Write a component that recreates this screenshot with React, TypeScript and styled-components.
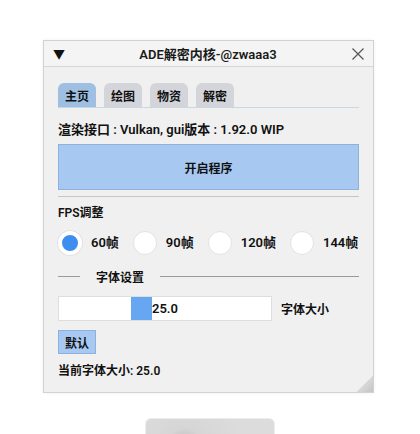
import styled, { createGlobalStyle } from "styled-components";

const GlobalStyle = createGlobalStyle`
  html, body {
    margin: 0;
    padding: 0;
    background: #ffffff;
  }
  body {
    font-family: "Noto Sans CJK SC", "Noto Sans", sans-serif;
    color: #111;
  }
`;

const fpsOptions = [
  { label: "60帧", checked: true },
  { label: "90帧", checked: false },
  { label: "120帧", checked: false },
  { label: "144帧", checked: false },
];

const tabs = [
  { label: "主页", active: true },
  { label: "绘图", active: false },
  { label: "物资", active: false },
  { label: "解密", active: false },
];

const fontSize = 25.0;
const sliderRatio = 0.34;

const App = () => {
  return (
    <Page>
      <GlobalStyle />
      <Window>
        <TitleBar>
          <Collapse>▼</Collapse>
          <Title>ADE解密内核-@zwaaa3</Title>
          <CloseIcon width="14" height="14" viewBox="0 0 14 14">
            <path d="M1.5 1.5 L12.5 12.5 M12.5 1.5 L1.5 12.5" stroke="#555" strokeWidth="1.2" />
          </CloseIcon>
        </TitleBar>
        <Body>
          <TabBar>
            {tabs.map((tab) => (
              <Tab key={tab.label} $active={tab.active}>
                {tab.label}
              </Tab>
            ))}
          </TabBar>
          <InfoText>渲染接口 : Vulkan, gui版本 : 1.92.0 WIP</InfoText>
          <BigButton>开启程序</BigButton>
          <Divider />
          <Label>FPS调整</Label>
          <RadioRow>
            {fpsOptions.map((opt) => (
              <RadioItem key={opt.label}>
                <RadioCircle $checked={opt.checked} />
                <RadioLabel>{opt.label}</RadioLabel>
              </RadioItem>
            ))}
          </RadioRow>
          <SectionTitle>
            <ShortLine />
            <SectionText>字体设置</SectionText>
            <LongLine />
          </SectionTitle>
          <SliderRow>
            <Slider>
              <Thumb style={{ left: `${sliderRatio * 100}%` }} />
              <SliderValue>{fontSize.toFixed(1)}</SliderValue>
            </Slider>
            <SliderLabel>字体大小</SliderLabel>
          </SliderRow>
          <SmallButton>默认</SmallButton>
          <StatusText>当前字体大小: {fontSize.toFixed(1)}</StatusText>
        </Body>
        <Grip />
      </Window>
      <Peek />
    </Page>
  );
};

export default App;

const Page = styled.div`
  width: 420px;
  height: 434px;
  overflow: hidden;
  padding: 40px 0 0 43px;
  box-sizing: border-box;
  display: flex;
  flex-direction: column;
`;

const Window = styled.div`
  position: relative;
  flex-shrink: 0;
  width: 331px;
  height: 353px;
  box-sizing: border-box;
  background: #f0f0f0;
  border: 1px solid #d2d2d2;
  box-shadow: 0 0 4px rgba(0, 0, 0, 0.06);
  display: flex;
  flex-direction: column;
`;

const TitleBar = styled.div`
  height: 25px;
  border-bottom: 1px solid #d6d6d6;
  background: #f4f4f4;
  display: flex;
  align-items: center;
  padding: 0 9px;
  position: relative;
`;

const Collapse = styled.span`
  font-size: 12px;
  color: #111;
  line-height: 1;
`;

const Title = styled.div`
  flex: 1;
  text-align: center;
  font-family: "Roboto", "Noto Sans CJK SC", sans-serif;
  font-size: 13px;
  font-weight: 600;
  color: #1a1a1a;
`;

const CloseIcon = styled.svg`
  display: block;
  margin-right: -1px;
`;

const Body = styled.div`
  padding: 16px 14px 0 14px;
  display: flex;
  flex-direction: column;
  align-items: flex-start;
  font-family: "Roboto", "Noto Sans CJK SC", sans-serif;
`;

const TabBar = styled.div`
  display: flex;
  gap: 8px;
  width: 100%;
  border-bottom: 1px solid #c9d6e4;
`;

const Tab = styled.div<{ $active: boolean }>`
  width: 38px;
  height: 24px;
  border-radius: 6px 6px 0 0;
  background: ${(p) => (p.$active ? "#9ebfe2" : "#d4d5da")};
  display: flex;
  align-items: center;
  justify-content: center;
  font-size: 12px;
  font-weight: 700;
  color: #111;
`;

const InfoText = styled.div`
  margin-top: 12px;
  font-size: 13px;
  font-weight: 600;
  line-height: 19px;
`;

const BigButton = styled.div`
  margin-top: 5px;
  width: 100%;
  height: 46px;
  box-sizing: border-box;
  background: #a7c9f1;
  border: 1px solid #8fb2dc;
  display: flex;
  align-items: center;
  justify-content: center;
  font-size: 12px;
  font-weight: 700;
  color: #111;
`;

const Divider = styled.div`
  margin-top: 6px;
  width: 100%;
  height: 1px;
  background: #c6c6c6;
`;

const Label = styled.div`
  margin-top: 7px;
  font-size: 12px;
  font-weight: 600;
  line-height: 18px;
`;

const RadioRow = styled.div`
  margin-top: 9px;
  display: flex;
  gap: 14px;
  white-space: nowrap;
`;

const RadioItem = styled.div`
  display: flex;
  flex-shrink: 0;
  align-items: center;
  gap: 9px;
`;

const RadioCircle = styled.div<{ $checked: boolean }>`
  width: 24px;
  height: 24px;
  flex-shrink: 0;
  border-radius: 50%;
  box-sizing: border-box;
  background: ${(p) => (p.$checked ? "#3e8ef0" : "#ffffff")};
  border: ${(p) => (p.$checked ? "4px solid #ffffff" : "1px solid #e2e2e2")};
  box-shadow: ${(p) => (p.$checked ? "0 0 0 1px #e2e2e2" : "none")};
`;

const RadioLabel = styled.span`
  font-size: 13px;
  font-weight: 600;
  line-height: 18px;
  white-space: nowrap;
`;

const SectionTitle = styled.div`
  margin-top: 12px;
  width: 100%;
  display: flex;
  align-items: center;
  height: 18px;
`;

const ShortLine = styled.div`
  width: 22px;
  height: 1px;
  background: #9a9a9a;
`;

const SectionText = styled.span`
  margin: 0 16px;
  font-size: 12px;
  font-weight: 600;
`;

const LongLine = styled.div`
  flex: 1;
  height: 1px;
  background: #9a9a9a;
`;

const SliderRow = styled.div`
  margin-top: 11px;
  display: flex;
  align-items: center;
  gap: 9px;
`;

const Slider = styled.div`
  position: relative;
  width: 214px;
  height: 25px;
  box-sizing: border-box;
  background: #ffffff;
  border: 1px solid #dedede;
  display: flex;
  align-items: center;
  justify-content: center;
`;

const Thumb = styled.div`
  position: absolute;
  top: 0;
  bottom: 0;
  width: 21px;
  background: #67a7f2;
`;

const SliderValue = styled.span`
  position: relative;
  font-size: 13px;
  font-weight: 600;
  color: #111;
`;

const SliderLabel = styled.span`
  font-size: 12px;
  font-weight: 600;
`;

const SmallButton = styled.div`
  margin-top: 9px;
  width: 38px;
  height: 24px;
  box-sizing: border-box;
  background: #a7c9f1;
  border: 1px solid #8fb2dc;
  display: flex;
  align-items: center;
  justify-content: center;
  font-size: 12px;
  font-weight: 700;
`;

const StatusText = styled.div`
  margin-top: 8px;
  font-size: 12px;
  font-weight: 600;
  line-height: 18px;
`;

const Grip = styled.div`
  position: absolute;
  right: 0;
  bottom: 0;
  width: 16px;
  height: 16px;
  background: linear-gradient(135deg, transparent 50%, #d8d8d8 50%, #c4c4c4 100%);
`;

const Peek = styled.div`
  flex-shrink: 0;
  margin: 25px 0 0 102px;
  width: 128px;
  height: 30px;
  border-radius: 6px 6px 0 0;
  border: 1px solid #ececec;
  background: radial-gradient(circle at 30% 90%, #b6b6b6 0, #d6d6d6 18px, #dcdcdc 60%);
`;
